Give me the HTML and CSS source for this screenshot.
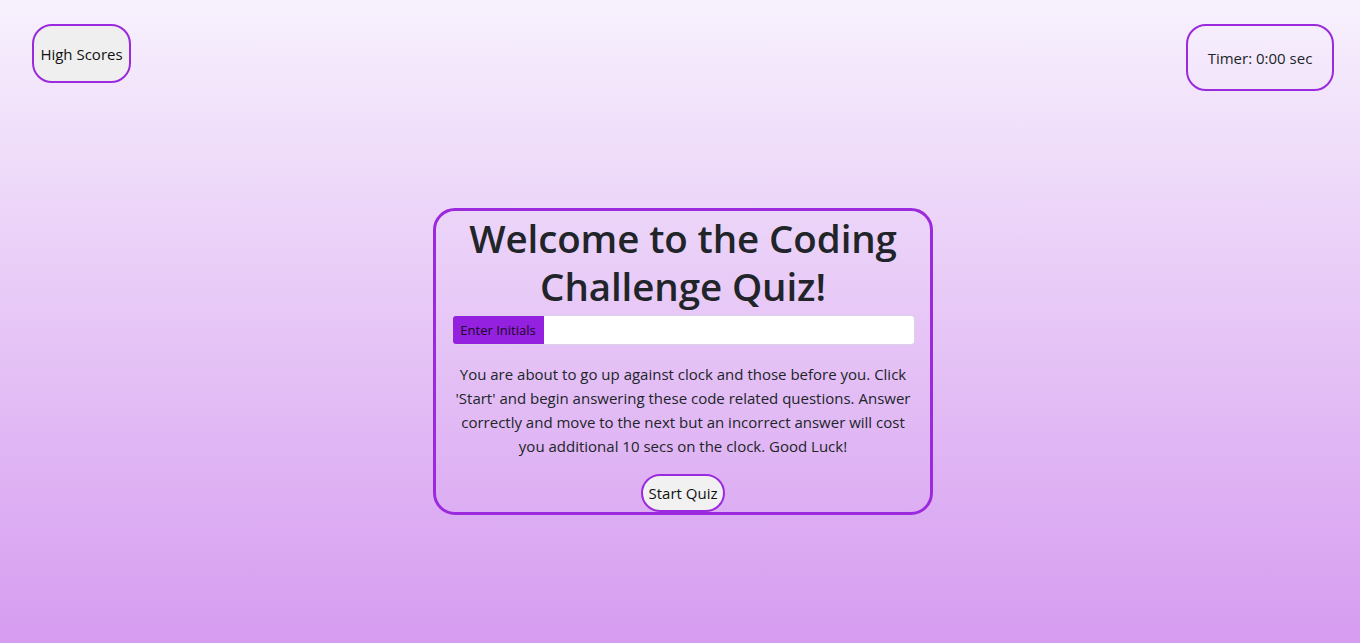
FILE: index.html
```html
<!DOCTYPE html>
<html lang="en">
<head>
<meta charset="utf-8">
<title>Coding Challenge Quiz</title>
<link rel="stylesheet" href="styles.css">
</head>
<body>
<header class="top-bar">
  <button class="high-scores">High Scores</button>
  <div class="timer">Timer: 0:00 sec</div>
</header>
<main class="stage">
  <section class="card">
    <h1 class="title">Welcome to the Coding Challenge Quiz!</h1>
    <div class="input-group">
      <span class="input-label">Enter Initials</span>
      <input class="input-field" type="text">
    </div>
    <p class="intro">You are about to go up against clock and those before you. Click 'Start' and begin answering these code related questions. Answer correctly and move to the next but an incorrect answer will cost you additional 10 secs on the clock. Good Luck!</p>
    <button class="start-btn">Start Quiz</button>
  </section>
</main>
</body>
</html>
```

FILE: styles.css
```css
* { box-sizing: border-box; }
html, body { height: 100%; }
body {
  margin: 0;
  font-family: "Open Sans", "Noto Sans", sans-serif;
  color: #212529;
  background: linear-gradient(to bottom, #f7f1fd 0%, #d69cf0 100%);
  min-height: 643px;
}
.top-bar {
  display: flex;
  justify-content: space-between;
  align-items: flex-start;
  padding: 24px 26px 0 32px;
  height: 208px;
}
.high-scores {
  width: 99px;
  height: 59px;
  border: 2px solid #9b2ade;
  border-radius: 20px;
  background: #efefef;
  color: #111;
  font-family: inherit;
  font-size: 15px;
  padding: 0;
}
.timer {
  width: 148px;
  height: 67px;
  border: 2px solid #9b2ade;
  border-radius: 20px;
  display: flex;
  align-items: center;
  justify-content: center;
  font-size: 15px;
  padding-top: 0;
}
.stage {
  display: flex;
  justify-content: center;
  padding-left: 6px;
}
.card {
  width: 500px;
  height: 307px;
  border: 3px solid #9b2ade;
  border-radius: 22px;
  padding: 3px 15px 0;
  text-align: center;
  display: flex;
  flex-direction: column;
  align-items: center;
}
.title {
  margin: 0;
  font-size: 38.5px;
  font-weight: 600;
  line-height: 48px;
  letter-spacing: -0.1px;
}
.input-group {
  display: flex;
  width: 463px;
  height: 30px;
  margin-top: 5px;
  border-radius: 4px;
  overflow: hidden;
  border: 1px solid #dcd0e8;
}
.input-label {
  background: #9420e0;
  color: #1a0a24;
  font-size: 13px;
  width: 91px;
  display: flex;
  align-items: center;
  justify-content: center;
}
.input-field {
  flex: 1;
  border: 0;
  background: #fff;
  outline: none;
}
.intro {
  margin: 17px 0 0;
  font-size: 15px;
  line-height: 24px;
  width: 463px;
}
.start-btn {
  margin-top: 16px;
  height: 38px;
  padding: 0 6px;
  border: 2px solid #9b2ade;
  border-radius: 20px;
  background: #f1f1f1;
  font-family: inherit;
  font-size: 15px;
  color: #111;
}
```
